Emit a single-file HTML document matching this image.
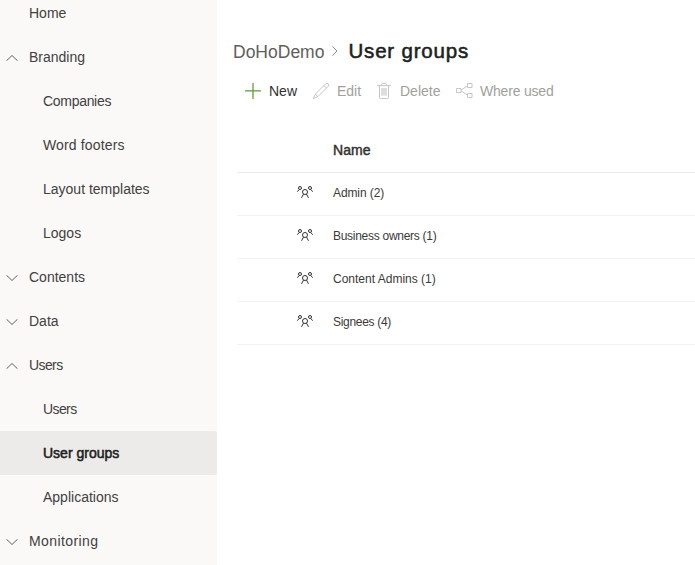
<!DOCTYPE html>
<html>
<head>
<meta charset="utf-8">
<style>
*{margin:0;padding:0;box-sizing:border-box;}
html,body{width:695px;height:565px;overflow:hidden;background:#fff;}
body{font-family:"Liberation Sans",sans-serif;color:#323130;position:relative;}
#nav{position:absolute;left:0;top:0;width:217px;height:565px;background:#faf9f8;}
.ni{position:absolute;left:0;width:217px;height:44px;font-size:14px;line-height:44px;white-space:nowrap;color:#42403f;}
.ni span{position:absolute;top:0;}
.ni.top span{left:29px;}
.ni.sub span{left:43px;}
.ni.sel{background:#edebe9;border-radius:0 2px 2px 0;}
.ni.sel span{-webkit-text-stroke:0.55px #201f1e;color:#201f1e;}
.chev{position:absolute;left:6px;top:20px;width:12px;height:6px;}
#main{position:absolute;left:217px;top:0;right:0;height:565px;background:#fff;}
.abs{position:absolute;white-space:nowrap;}
</style>
</head>
<body>
<div id="nav">
  <div class="ni top" style="top:-9px"><span>Home</span></div>
  <div class="ni top" style="top:35px"><svg class="chev" viewBox="0 0 12 6"><path d="M0.5 5.8 L6 0.5 L11.5 5.8" fill="none" stroke="#605e5c" stroke-width="1"/></svg><span>Branding</span></div>
  <div class="ni sub" style="top:79px"><span style="letter-spacing:-0.3px">Companies</span></div>
  <div class="ni sub" style="top:123px"><span style="letter-spacing:0.15px">Word footers</span></div>
  <div class="ni sub" style="top:167px"><span>Layout templates</span></div>
  <div class="ni sub" style="top:211px"><span>Logos</span></div>
  <div class="ni top" style="top:255px"><svg class="chev" viewBox="0 0 12 6"><path d="M0.5 0.2 L6 5.5 L11.5 0.2" fill="none" stroke="#605e5c" stroke-width="1"/></svg><span>Contents</span></div>
  <div class="ni top" style="top:299px"><svg class="chev" viewBox="0 0 12 6"><path d="M0.5 0.2 L6 5.5 L11.5 0.2" fill="none" stroke="#605e5c" stroke-width="1"/></svg><span>Data</span></div>
  <div class="ni top" style="top:343px"><svg class="chev" viewBox="0 0 12 6"><path d="M0.5 5.8 L6 0.5 L11.5 5.8" fill="none" stroke="#605e5c" stroke-width="1"/></svg><span style="letter-spacing:-0.6px">Users</span></div>
  <div class="ni sub" style="top:387px"><span style="letter-spacing:-0.6px">Users</span></div>
  <div class="ni sub sel" style="top:431px"><span>User groups</span></div>
  <div class="ni sub" style="top:475px"><span>Applications</span></div>
  <div class="ni top" style="top:519px"><svg class="chev" viewBox="0 0 12 6"><path d="M0.5 0.2 L6 5.5 L11.5 0.2" fill="none" stroke="#605e5c" stroke-width="1"/></svg><span style="letter-spacing:0.4px">Monitoring</span></div>
</div>
<div id="main"></div>
<div class="abs" style="left:233px;top:40.4px;font-size:17.5px;line-height:24px;color:#605e5c">DoHoDemo</div>
<svg class="abs" style="left:332px;top:46px" width="6" height="10" viewBox="0 0 6 10"><path d="M0.5 0.3 L4.9 5 L0.5 9.7" fill="none" stroke="#8a8886" stroke-width="1"/></svg>
<div class="abs" style="left:348.5px;top:37px;font-size:20.5px;line-height:28px;-webkit-text-stroke:0.55px #201f1e;letter-spacing:0.8px;color:#201f1e">User groups</div>

<!-- command bar -->
<svg class="abs" style="left:245px;top:83px" width="16" height="16" viewBox="0 0 16 16"><path d="M0 7.9 H16 M8 0 V16" stroke="#5f9b32" stroke-width="1.25"/></svg>
<div class="abs" style="left:269px;top:82px;font-size:14px;line-height:18px;color:#323130">New</div>
<svg class="abs" style="left:313px;top:83px" width="16" height="16" viewBox="0 0 16 16" overflow="visible"><path d="M0.3 15.7 L2.41 11.05 L12.66 0.8 A1.8 1.8 0 0 1 15.2 3.34 L4.95 13.59 Z M2.41 11.05 L4.95 13.59 M10.9 2.56 L13.44 5.1" fill="none" stroke="#c8c6c4" stroke-width="1" stroke-linejoin="round"/></svg>
<div class="abs" style="left:337px;top:82px;font-size:14px;line-height:18px;color:#a19f9d">Edit</div>
<svg class="abs" style="left:376px;top:82px" width="16" height="18" viewBox="0 0 16 18"><path d="M1 3.5 H15 M5.5 3.5 V2.5 Q5.5 1.5 6.5 1.5 H9.5 Q10.5 1.5 10.5 2.5 V3.5 M3.5 3.5 V15.5 Q3.5 16.5 4.5 16.5 H11.5 Q12.5 16.5 12.5 15.5 V3.5" fill="none" stroke="#c8c6c4" stroke-width="1"/><path d="M6 6 V13.7 M8 6 V13.7 M10 6 V13.7" fill="none" stroke="#bebcba" stroke-width="1"/></svg>
<div class="abs" style="left:400px;top:82px;font-size:14px;line-height:18px;color:#a19f9d">Delete</div>
<svg class="abs" style="left:455px;top:82px" width="18" height="17" viewBox="0 0 18 17"><path d="M1.5 6.5 H6 V10.5 H1.5 Z M12.5 1.5 H17 V5.5 H12.5 Z M12.5 11.5 H17 V15.5 H12.5 Z M6 8 L12.5 4 M6 9 L12.5 13" fill="none" stroke="#c8c6c4" stroke-width="1"/></svg>
<div class="abs" style="left:480px;top:82px;font-size:14px;line-height:18px;color:#a19f9d;letter-spacing:-0.2px">Where used</div>

<!-- table -->
<div class="abs" style="left:333px;top:141px;font-size:14px;line-height:18px;-webkit-text-stroke:0.45px #323130;letter-spacing:0.1px;color:#323130">Name</div>
<div class="abs" style="left:237px;top:172px;width:458px;height:1px;background:#edebe9"></div>
<div class="abs" style="left:237px;top:215px;width:458px;height:1px;background:#f3f2f1"></div>
<div class="abs" style="left:237px;top:258px;width:458px;height:1px;background:#f3f2f1"></div>
<div class="abs" style="left:237px;top:301px;width:458px;height:1px;background:#f3f2f1"></div>
<div class="abs" style="left:237px;top:344px;width:458px;height:1px;background:#f3f2f1"></div>

<div class="abs" style="left:333px;top:185px;font-size:12px;line-height:16px;color:#3b3a39;letter-spacing:-0.1px">Admin (2)</div>
<div class="abs" style="left:333px;top:228px;font-size:12px;line-height:16px;color:#3b3a39;letter-spacing:-0.28px">Business owners (1)</div>
<div class="abs" style="left:333px;top:271px;font-size:12px;line-height:16px;color:#3b3a39">Content Admins (1)</div>
<div class="abs" style="left:333px;top:314px;font-size:12px;line-height:16px;color:#3b3a39;letter-spacing:-0.3px">Signees (4)</div>

<svg class="abs" style="left:297px;top:184px" width="16" height="16" viewBox="0 0 16 16"><g fill="none" stroke="#323130" stroke-width="1"><circle cx="3" cy="4" r="1.5"/><circle cx="13" cy="4" r="1.5"/><circle cx="8" cy="8" r="2.5"/><path d="M2 5.6 L0.4 7.7 M14 5.6 L15.6 7.7 M6.5 10.1 L4.5 13.8 M9.5 10.1 L11.5 13.8"/></g></svg>
<svg class="abs" style="left:297px;top:227px" width="16" height="16" viewBox="0 0 16 16"><g fill="none" stroke="#323130" stroke-width="1"><circle cx="3" cy="4" r="1.5"/><circle cx="13" cy="4" r="1.5"/><circle cx="8" cy="8" r="2.5"/><path d="M2 5.6 L0.4 7.7 M14 5.6 L15.6 7.7 M6.5 10.1 L4.5 13.8 M9.5 10.1 L11.5 13.8"/></g></svg>
<svg class="abs" style="left:297px;top:270px" width="16" height="16" viewBox="0 0 16 16"><g fill="none" stroke="#323130" stroke-width="1"><circle cx="3" cy="4" r="1.5"/><circle cx="13" cy="4" r="1.5"/><circle cx="8" cy="8" r="2.5"/><path d="M2 5.6 L0.4 7.7 M14 5.6 L15.6 7.7 M6.5 10.1 L4.5 13.8 M9.5 10.1 L11.5 13.8"/></g></svg>
<svg class="abs" style="left:297px;top:313px" width="16" height="16" viewBox="0 0 16 16"><g fill="none" stroke="#323130" stroke-width="1"><circle cx="3" cy="4" r="1.5"/><circle cx="13" cy="4" r="1.5"/><circle cx="8" cy="8" r="2.5"/><path d="M2 5.6 L0.4 7.7 M14 5.6 L15.6 7.7 M6.5 10.1 L4.5 13.8 M9.5 10.1 L11.5 13.8"/></g></svg>
</body>
</html>
